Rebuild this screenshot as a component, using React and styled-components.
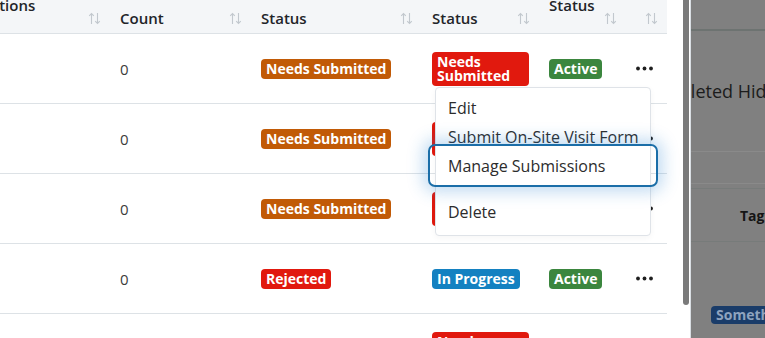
import React from 'react';
import styled, { createGlobalStyle } from 'styled-components';

const GlobalStyle = createGlobalStyle`
  html, body {
    margin: 0;
    padding: 0;
    background: #ffffff;
  }
  body {
    font-family: 'Open Sans', 'Liberation Sans', sans-serif;
    overflow: hidden;
  }
`;

const Page = styled.div`
  display: flex;
  width: 765px;
  height: 338px;
  overflow: hidden;
`;

const Main = styled.div`
  display: flex;
  width: 690px;
  flex-shrink: 0;
  background: #ffffff;
`;

const TableArea = styled.div`
  position: relative;
  width: 683px;
  overflow: hidden;
`;

const Table = styled.div`
  margin-left: -70px;
  width: 737px;
`;

const cols = '180px 141px 171px 117px 87px 41px';

const HeaderRow = styled.div`
  display: grid;
  grid-template-columns: ${cols};
  height: 34px;
  background: #f4f6f8;
  border-bottom: 1px solid #dde2e6;
  box-sizing: border-box;
`;

const HeaderCell = styled.div`
  display: flex;
  align-items: center;
  gap: 4px;
  padding: 0 9px 0 10px;
  font-size: 15px;
  font-weight: 600;
  color: #222428;
  min-width: 0;
`;

const HeaderLabel = styled.span`
  flex: 1 1 0;
  min-width: 0;
  line-height: 20px;
  white-space: pre;
  transform: translateY(${p => (p.$lines > 1 ? '-25px' : '-2px')});
`;

const SortIcon = () => (
  <svg width="13" height="13" viewBox="0 0 13 13" fill="none" stroke="#c2c8ce" strokeWidth="1.1" style={{ marginTop: -3, flexShrink: 0 }}>
    <path d="M3.5 12V1.5M1.2 3.8L3.5 1.5L5.8 3.8" />
    <path d="M9.5 1V11.5M7.2 9.2L9.5 11.5L11.8 9.2" />
  </svg>
);

const Row = styled.div`
  display: grid;
  grid-template-columns: ${cols};
  height: 70px;
  border-bottom: 1px solid #dde2e6;
  box-sizing: border-box;
`;

const Cell = styled.div`
  display: flex;
  align-items: center;
  padding: 0 10px;
  font-size: 15px;
  color: #3c3c3c;
  min-width: 0;
`;

const badgeColors = {
  orange: '#c15a06',
  red: '#e1190e',
  green: '#3b863e',
  blue: '#1481c1',
};

const Badge = styled.span`
  display: inline-block;
  background: ${p => badgeColors[p.$tone]};
  color: #ffffff;
  font-size: 14px;
  font-weight: 700;
  line-height: 14px;
  padding: 3px 5px;
  border-radius: 4px;
  max-width: 100%;
  box-sizing: border-box;
`;

const DotsIcon = () => (
  <svg width="17" height="5" viewBox="0 0 17 5" fill="#1f1f1f">
    <circle cx="2" cy="2.5" r="1.9" />
    <circle cx="8.5" cy="2.5" r="1.9" />
    <circle cx="15" cy="2.5" r="1.9" />
  </svg>
);

const Menu = styled.div`
  position: absolute;
  left: 435px;
  top: 87px;
  width: 216px;
  height: 149px;
  box-sizing: border-box;
  background: #ffffff;
  border: 1px solid #dfe3e8;
  border-radius: 4px;
  box-shadow: 0 2px 6px rgba(0, 0, 0, 0.04);
  padding: 5px 0 8px;
  display: flex;
  flex-direction: column;
`;

const MenuItem = styled.div`
  position: relative;
  height: 29px;
  display: flex;
  align-items: center;
  padding: 0 12px;
  font-size: 16px;
  color: #2c2c2c;
  white-space: nowrap;

  ${p => p.$focused && `
    &::after {
      content: '';
      position: absolute;
      left: -8px;
      right: -8px;
      top: -7px;
      bottom: -7px;
      border: 2px solid #1b6ea8;
      border-radius: 7px;
      box-shadow: 0 0 16px 5px rgba(40, 130, 210, 0.28);
    }
  `}
`;

const MenuGap = styled.div`
  height: 17px;
`;

const Scrollbar = styled.div`
  width: 7px;
  background: #ffffff;
`;

const Thumb = styled.div`
  width: 6px;
  height: 305px;
  background: #7a7a7a;
  border-radius: 0 0 3px 3px;
`;

const Divider = styled.div`
  width: 1px;
  background: #d9dee3;
  flex-shrink: 0;
`;

const Panel = styled.div`
  flex: 1;
  background: #808080;
  overflow: hidden;
  display: flex;
  flex-direction: column;
`;

const PanelTop = styled.div`
  height: 29px;
  border-bottom: 2px solid #6d7371;
  flex-shrink: 0;
`;

const PanelRow = styled.div`
  height: ${p => p.$h}px;
  flex-shrink: 0;
  display: flex;
  align-items: ${p => (p.$top ? 'flex-start' : 'center')};
  border-bottom: ${p => (p.$line ? `1px solid ${p.$line}` : 'none')};
  box-sizing: border-box;
  padding-left: ${p => p.$pad || 0}px;
  padding-top: ${p => p.$top || 0}px;
`;

const PanelText = styled.span`
  font-size: 18px;
  color: #1c1c1c;
  white-space: nowrap;
  margin-left: -50px;
`;

const PanelHead = styled.span`
  font-size: 14px;
  font-weight: 700;
  color: #151515;
  white-space: nowrap;
`;

const DimBadge = styled.span`
  background: #1a3c69;
  color: #8ea3bf;
  font-size: 14px;
  font-weight: 700;
  line-height: 14px;
  padding: 2px 5px;
  border-radius: 4px;
  white-space: nowrap;
`;

const rows = [
  { status: ['orange', 'Needs Submitted'], review: ['red', 'Needs Submitted'], active: true },
  { status: ['orange', 'Needs Submitted'], review: ['red', 'Needs Submitted'], active: true },
  { status: ['orange', 'Needs Submitted'], review: ['red', 'Needs Submitted'], active: true },
  { status: ['red', 'Rejected'], review: ['blue', 'In Progress'], active: true },
  { status: ['orange', 'Needs Submitted'], review: ['red', 'Needs Submitted'], active: true },
];

const headers = [
  { label: 'Total\nRegistrations', lines: 2 },
  { label: 'Count', lines: 1 },
  { label: 'Status', lines: 1 },
  { label: 'Status', lines: 1 },
  { label: 'Registration\nStatus', lines: 2 },
  { label: '', lines: 1 },
];

export default function App() {
  return (
    <>
      <GlobalStyle />
      <Page>
        <Main>
          <TableArea>
            <Table>
              <HeaderRow>
                {headers.map((h, i) => (
                  <HeaderCell key={i}>
                    <HeaderLabel $lines={h.lines}>{h.label}</HeaderLabel>
                    <SortIcon />
                  </HeaderCell>
                ))}
              </HeaderRow>
              {rows.map((r, i) => (
                <Row key={i}>
                  <Cell />
                  <Cell>0</Cell>
                  <Cell><Badge $tone={r.status[0]}>{r.status[1]}</Badge></Cell>
                  <Cell><Badge $tone={r.review[0]}>{r.review[1]}</Badge></Cell>
                  <Cell>{r.active && <Badge $tone="green">Active</Badge>}</Cell>
                  <Cell><DotsIcon /></Cell>
                </Row>
              ))}
            </Table>
            <Menu>
              <MenuItem>Edit</MenuItem>
              <MenuItem>Submit On-Site Visit Form</MenuItem>
              <MenuItem $focused>Manage Submissions</MenuItem>
              <MenuGap />
              <MenuItem>Delete</MenuItem>
            </Menu>
          </TableArea>
          <Scrollbar>
            <Thumb />
          </Scrollbar>
        </Main>
        <Divider />
        <Panel>
          <PanelTop />
          <PanelRow $h={121} $line="#8a8a8a">
            <PanelText>Completed Hidden</PanelText>
          </PanelRow>
          <PanelRow $h={32} $line="#8a8a8a" />
          <PanelRow $h={5} $line="#777b7a" />
          <PanelRow $h={53} $line="#777b7a" $pad={49}>
            <PanelHead>Tags</PanelHead>
          </PanelRow>
          <PanelRow $h={97} $pad={20} $top={64}>
            <DimBadge>Something</DimBadge>
          </PanelRow>
        </Panel>
      </Page>
    </>
  );
}
